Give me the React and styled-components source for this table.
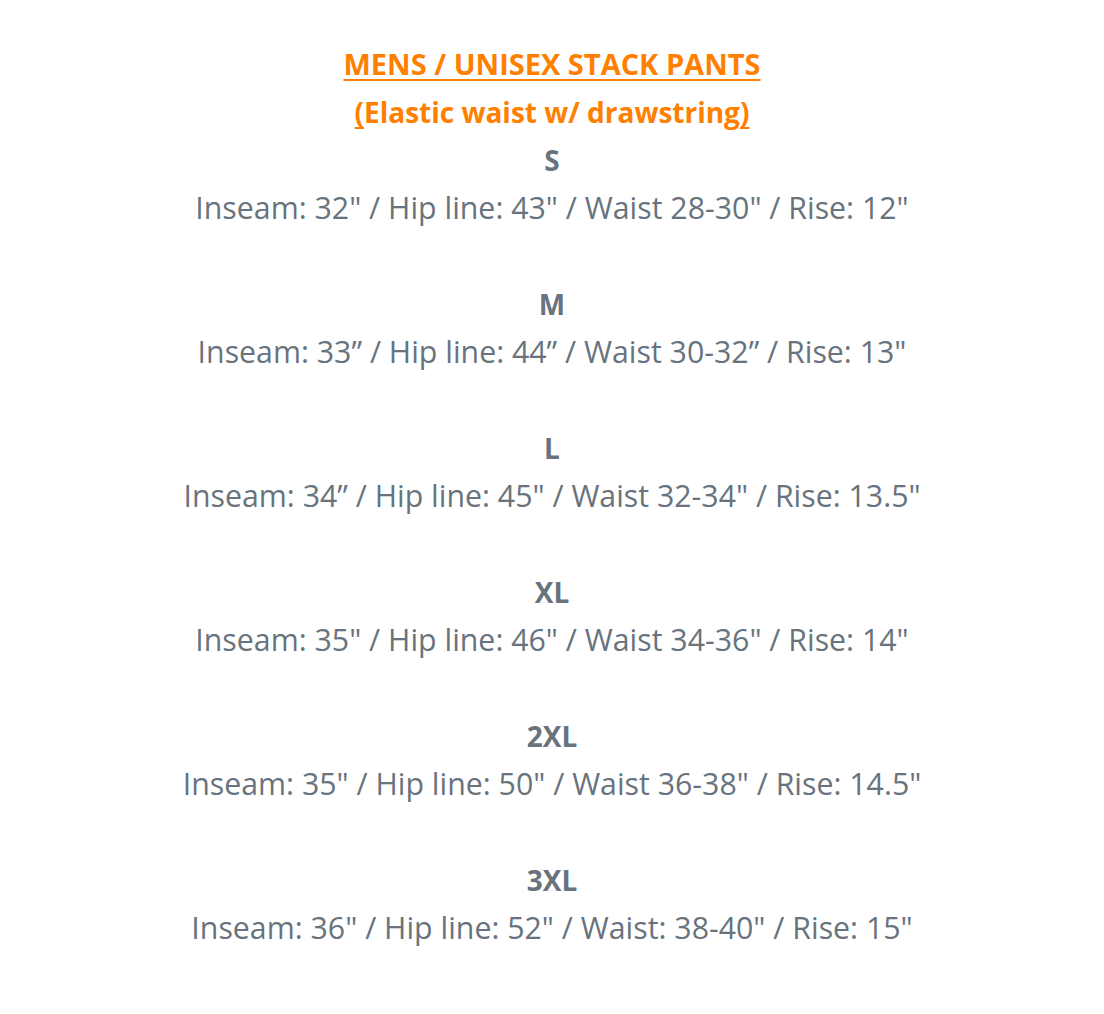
import React from 'react';
import styled, { createGlobalStyle } from 'styled-components';

const GlobalStyle = createGlobalStyle`
  html, body {
    margin: 0;
    padding: 0;
    background: #ffffff;
  }
`;

const SIZES = [
  { label: 'S', text: 'Inseam: 32" / Hip line: 43" / Waist 28-30" / Rise: 12"' },
  { label: 'M', text: 'Inseam: 33\u201D / Hip line: 44\u201D / Waist 30-32\u201D / Rise: 13"' },
  { label: 'L', text: 'Inseam: 34\u201D / Hip line: 45" / Waist 32-34" / Rise: 13.5"' },
  { label: 'XL', text: 'Inseam: 35" / Hip line: 46" / Waist 34-36" / Rise: 14"' },
  { label: '2XL', text: 'Inseam: 35" / Hip line: 50" / Waist 36-38" / Rise: 14.5"' },
  { label: '3XL', text: 'Inseam: 36" / Hip line: 52" / Waist: 38-40" / Rise: 15"' },
];

const Page = styled.main`
  padding: 40px 0 40px;
  font-family: "Open Sans", Lato, sans-serif;
  text-align: center;
  color: #68737d;
`;

const Title = styled.div`
  font-size: ${props => props.$size || 29}px;
  font-weight: 700;
  line-height: 48px;
  color: #ff8000;
`;

const Underlined = styled.span`
  text-decoration: underline;
  text-decoration-thickness: 2px;
  text-underline-offset: 4px;
  text-decoration-skip-ink: auto;
`;

const SizeBlock = styled.section`
  padding-bottom: 48px;

  &:last-child {
    padding-bottom: 0;
  }
`;

const SizeLabel = styled.div`
  font-size: 28px;
  font-weight: 700;
  line-height: 48px;
`;

const Measures = styled.div`
  font-size: 30.3px;
  line-height: 48px;
`;

const App = () => (
  <>
    <GlobalStyle />
    <Page>
      <Title><Underlined>MENS / UNISEX STACK PANTS</Underlined></Title>
      <Title $size={28}>
        <Underlined>(</Underlined>Elastic waist w/ drawstring<Underlined>)</Underlined>
      </Title>
      {SIZES.map(size => (
        <SizeBlock key={size.label}>
          <SizeLabel>{size.label}</SizeLabel>
          <Measures>{size.text}</Measures>
        </SizeBlock>
      ))}
    </Page>
  </>
);

export default App;
